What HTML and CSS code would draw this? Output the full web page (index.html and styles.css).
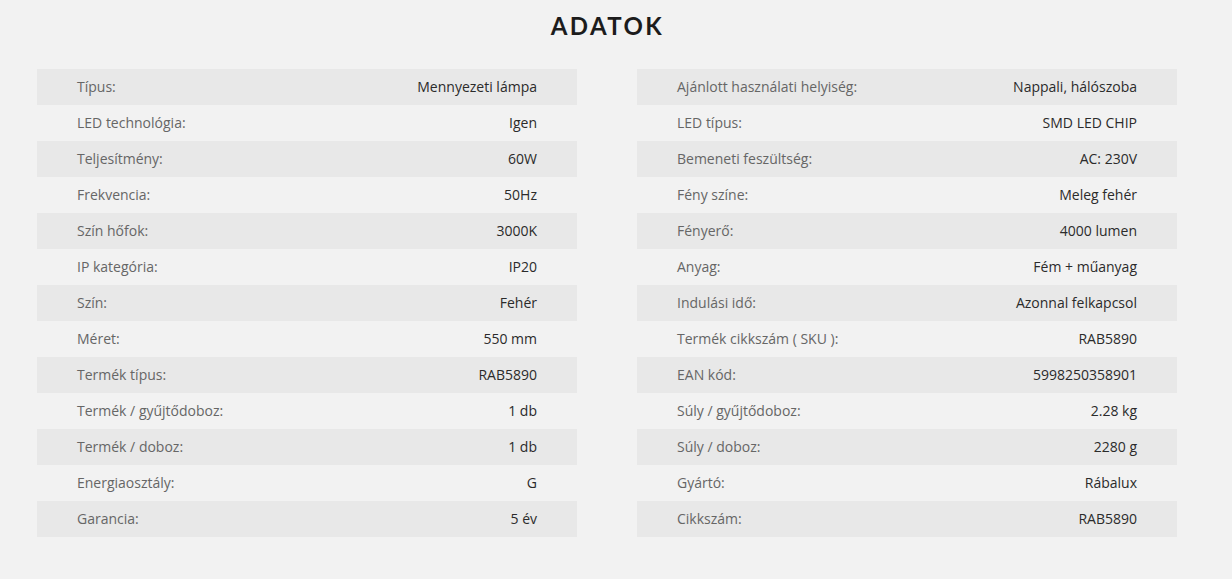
FILE: index.html
```html
<!DOCTYPE html>
<html lang="hu">
<head>
<meta charset="utf-8">
<title>Adatok</title>
<link rel="stylesheet" href="styles.css">
</head>
<body>
<section class="specs">
  <h2 class="title">ADATOK</h2>
  <div class="tables">
    <div class="table">
      <div class="row"><span class="label">Típus:</span><span class="value">Mennyezeti lámpa</span></div>
      <div class="row"><span class="label">LED technológia:</span><span class="value">Igen</span></div>
      <div class="row"><span class="label">Teljesítmény:</span><span class="value">60W</span></div>
      <div class="row"><span class="label">Frekvencia:</span><span class="value">50Hz</span></div>
      <div class="row"><span class="label">Szín hőfok:</span><span class="value">3000K</span></div>
      <div class="row"><span class="label">IP kategória:</span><span class="value">IP20</span></div>
      <div class="row"><span class="label">Szín:</span><span class="value">Fehér</span></div>
      <div class="row"><span class="label">Méret:</span><span class="value">550 mm</span></div>
      <div class="row"><span class="label">Termék típus:</span><span class="value">RAB5890</span></div>
      <div class="row"><span class="label">Termék / gyűjtődoboz:</span><span class="value">1 db</span></div>
      <div class="row"><span class="label">Termék / doboz:</span><span class="value">1 db</span></div>
      <div class="row"><span class="label">Energiaosztály:</span><span class="value">G</span></div>
      <div class="row"><span class="label">Garancia:</span><span class="value">5 év</span></div>
    </div>
    <div class="table">
      <div class="row"><span class="label">Ajánlott használati helyiség:</span><span class="value">Nappali, hálószoba</span></div>
      <div class="row"><span class="label">LED típus:</span><span class="value">SMD LED CHIP</span></div>
      <div class="row"><span class="label">Bemeneti feszültség:</span><span class="value">AC: 230V</span></div>
      <div class="row"><span class="label">Fény színe:</span><span class="value">Meleg fehér</span></div>
      <div class="row"><span class="label">Fényerő:</span><span class="value">4000 lumen</span></div>
      <div class="row"><span class="label">Anyag:</span><span class="value">Fém + műanyag</span></div>
      <div class="row"><span class="label">Indulási idő:</span><span class="value">Azonnal felkapcsol</span></div>
      <div class="row"><span class="label">Termék cikkszám ( SKU ):</span><span class="value">RAB5890</span></div>
      <div class="row"><span class="label">EAN kód:</span><span class="value">5998250358901</span></div>
      <div class="row"><span class="label">Súly / gyűjtődoboz:</span><span class="value">2.28 kg</span></div>
      <div class="row"><span class="label">Súly / doboz:</span><span class="value">2280 g</span></div>
      <div class="row"><span class="label">Gyártó:</span><span class="value">Rábalux</span></div>
      <div class="row"><span class="label">Cikkszám:</span><span class="value">RAB5890</span></div>
    </div>
  </div>
</section>
</body>
</html>
```

FILE: styles.css
```css
html, body {
  margin: 0;
  padding: 0;
  background: #f2f2f2;
}
body {
  font-family: "Open Sans", "Liberation Sans", sans-serif;
  height: 579px;
  overflow: hidden;
}
.specs {
  width: 1140px;
  margin-left: 37px;
  padding-top: 10px;
}
.title {
  margin: 0;
  text-align: center;
  font-family: "Lato", "Open Sans", sans-serif;
  font-weight: 700;
  font-size: 24px;
  letter-spacing: 2.4px;
  line-height: 32px;
  color: #1c1c1c;
  padding-left: 1px;
}
.tables {
  display: grid;
  grid-template-columns: 540px 540px;
  column-gap: 60px;
  margin-top: 27px;
}
.row {
  display: flex;
  justify-content: space-between;
  align-items: center;
  height: 36px;
  padding: 0 40px 2px;
  box-sizing: border-box;
  font-size: 14px;
}
.row:nth-child(odd) {
  background: #e8e8e8;
}
.label {
  color: #666;
}
.value {
  color: #2b2b2b;
}
```
